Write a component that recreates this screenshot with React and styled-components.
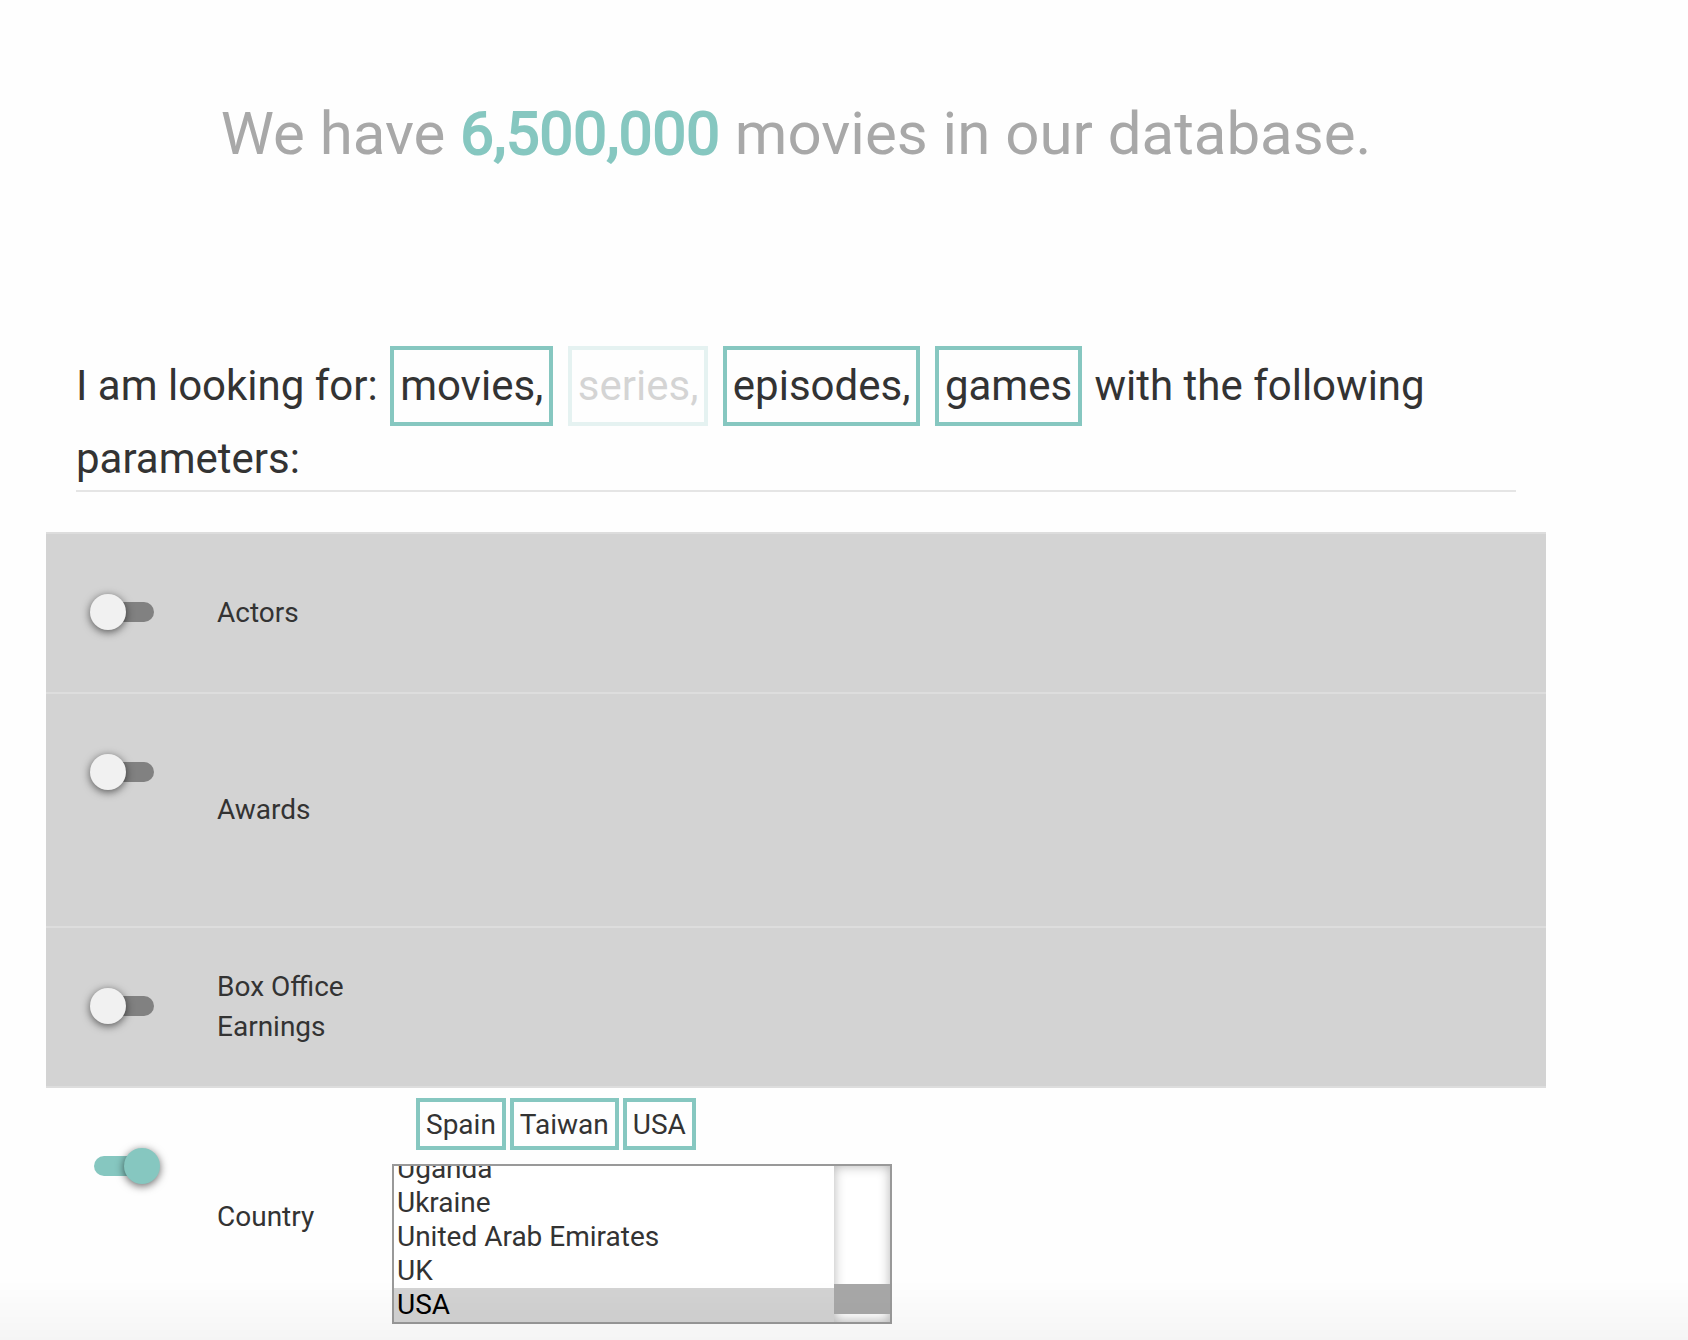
import React, { useEffect, useRef, useState } from 'react';
import styled, { createGlobalStyle } from 'styled-components';

const teal = '#86c7c0';

const GlobalStyle = createGlobalStyle`
  *, *::before, *::after { box-sizing: border-box; }
  body {
    margin: 0;
    background: #fefefe;
    color: #333;
    font: 400 28px/40px Roboto, "Liberation Sans", sans-serif;
  }
  button, select { font: inherit; color: inherit; }
`;

const Page = styled.main`
  padding: 94px 142px 0 46px;
`;

const Title = styled.h1`
  margin: 0 0 172px;
  font-size: 60px;
  line-height: 80px;
  font-weight: 400;
  text-align: center;
  color: #a8a8a8;
`;

const Count = styled.strong`
  font-weight: 400;
  color: ${teal};
  -webkit-text-stroke: 2px ${teal};
`;

const Query = styled.h2`
  margin: 0 30px 40px;
  border-bottom: 2px solid #e5e5e5;
  font-size: 42px;
  line-height: 62px;
  font-weight: 400;
`;

const TypeChip = styled.button`
  margin: 0 2px 2px;
  padding: 0 6px;
  border: 4px solid ${teal};
  background: none;
  line-height: 72px;
  cursor: pointer;
  opacity: ${(p) => (p['aria-pressed'] ? 1 : 0.2)};
`;

const Filters = styled.section`
  border-top: 2px solid #ddd;
`;

const Row = styled.div`
  display: grid;
  grid-template-columns: 171px 175px 1fr;
  align-items: center;
  min-height: ${(p) => (p.$tall ? 234 : 160)}px;
  background: ${(p) => (p.$on ? 'transparent' : '#d3d3d3')};
  border-bottom: 2px solid ${(p) => (p.$on ? '#e5e5e5' : '#ddd')};
`;

const Switch = styled.input`
  appearance: none;
  align-self: start;
  display: flex;
  align-items: center;
  width: 60px;
  height: 20px;
  margin: 68px 0 0 48px;
  border-radius: 10px;
  background: #818181;
  cursor: pointer;

  &::before {
    content: '';
    flex: none;
    width: 36px;
    height: 36px;
    margin-left: -4px;
    border-radius: 50%;
    background: #f1f1f1;
    box-shadow: 0 2px 8px rgba(0, 0, 0, 0.6);
  }

  &:checked { background: ${teal}; }
  &:checked::before { margin-left: 30px; background: ${teal}; }
`;

const Name = styled.label`
  padding-right: 16px;
`;

const Picker = styled.div`
  display: flex;
  flex-direction: column;
  align-items: flex-start;
  gap: 14px;
  padding: 10px 0 22px;
`;

const Chips = styled.div`
  display: flex;
  gap: 4px;
  margin-left: 24px;
`;

const Chip = styled.button`
  padding: 2px 6px 0;
  border: 4px solid ${teal};
  background: none;
  line-height: 42px;
  cursor: pointer;
`;

const ListFrame = styled.div`
  display: flex;
  width: 500px;
  height: 160px;
  border: 2px solid #999;
  background: #fff;
`;

const List = styled.select`
  flex: 1;
  min-width: 0;
  height: 156px;
  padding: 0;
  border: 0;
  border-radius: 0;
  outline: none;
  background: none;
  scrollbar-width: none;

  option {
    height: 34px;
    min-height: 34px;
    padding: 0 3px;
    line-height: 34px;
  }
  option:checked {
    background: #d3d3d3 linear-gradient(#d3d3d3, #d3d3d3);
    color: #000;
  }
`;

const ScrollTrack = styled.div`
  display: flex;
  align-items: flex-end;
  width: 56px;
  padding-bottom: 8px;
  box-shadow: inset 0 0 12px rgba(0, 0, 0, 0.3);
`;

const ScrollThumb = styled.div`
  width: 100%;
  height: 30px;
  background: #a8a8a8;
`;

const BottomFade = styled.div`
  position: fixed;
  inset: auto 0 0;
  height: 60px;
  background: linear-gradient(rgba(0, 0, 0, 0), rgba(0, 0, 0, 0.035));
  pointer-events: none;
`;

const types = ['movies,', 'series,', 'episodes,', 'games'];
const filters = [
  { id: 'actors', name: 'Actors' },
  { id: 'awards', name: 'Awards', tall: true },
  { id: 'box-office', name: 'Box Office Earnings' },
  { id: 'country', name: 'Country' },
];
const countries = ['Spain', 'Taiwan', 'Uganda', 'Ukraine', 'United Arab Emirates', 'UK', 'USA'];

function CountryPicker() {
  const list = useRef(null);
  const [chosen, setChosen] = useState(['Spain', 'Taiwan', 'USA']);

  // The browser first scrolls a list to its first selected option,
  // so the jump to the end has to wait until that has happened.
  useEffect(() => {
    let frame = requestAnimationFrame(() => {
      frame = requestAnimationFrame(() => {
        if (list.current) list.current.scrollTop = list.current.scrollHeight;
      });
    });
    return () => cancelAnimationFrame(frame);
  }, []);

  return (
    <Picker>
      <Chips>
        {chosen.map((c) => (
          <Chip key={c} type="button" onClick={() => setChosen(chosen.filter((x) => x !== c))}>
            {c}
          </Chip>
        ))}
      </Chips>
      <ListFrame>
        <List
          ref={list}
          multiple
          size={4}
          aria-label="Countries"
          value={chosen}
          onChange={(e) => setChosen(Array.from(e.target.selectedOptions, (o) => o.value))}
        >
          {countries.map((c) => (
            <option key={c}>{c}</option>
          ))}
        </List>
        <ScrollTrack aria-hidden="true">
          <ScrollThumb />
        </ScrollTrack>
      </ListFrame>
    </Picker>
  );
}

export default function App() {
  const [active, setActive] = useState({ 'movies,': true, 'episodes,': true, games: true });
  const [on, setOn] = useState({ country: true });

  return (
    <>
      <GlobalStyle />
      <Page>
        <Title>
          We have <Count>6,500,000</Count> movies in our database.
        </Title>
        <Query>
          <span>I am looking for:</span>{' '}
          {types.map((t) => (
            <React.Fragment key={t}>
              <TypeChip
                type="button"
                aria-pressed={Boolean(active[t])}
                onClick={() => setActive({ ...active, [t]: !active[t] })}
              >
                {t}
              </TypeChip>{' '}
            </React.Fragment>
          ))}
          <span>with the following</span> <span>parameters:</span>
        </Query>
        <Filters>
          {filters.map((f) => (
            <Row key={f.id} $on={on[f.id]} $tall={f.tall}>
              <Switch
                type="checkbox"
                role="switch"
                id={f.id}
                checked={Boolean(on[f.id])}
                onChange={(e) => setOn({ ...on, [f.id]: e.target.checked })}
              />
              <Name htmlFor={f.id}>{f.name}</Name>
              {f.id === 'country' && on.country && <CountryPicker />}
            </Row>
          ))}
        </Filters>
      </Page>
      <BottomFade />
    </>
  );
}
